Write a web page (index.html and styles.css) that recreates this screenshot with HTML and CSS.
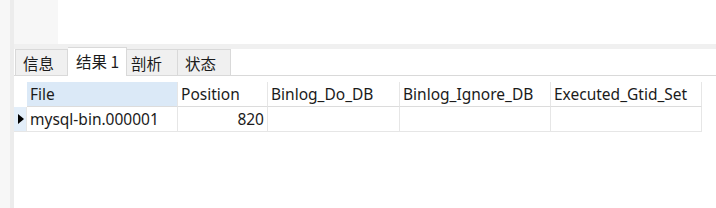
FILE: index.html
```html
<!DOCTYPE html>
<html lang="zh-CN">
  <head>
    <meta charset="UTF-8" />
    <title>结果</title>
    <link rel="stylesheet" href="styles.css">
  </head>
  <body>
    <div class="window">
      <div class="gutter"></div>
      <div class="main">
        <div class="toolbar">
          <div class="toolbar-left"></div>
        </div>
        <div class="band"></div>
        <div class="tabs">
          <div class="tab w-info">信息</div>
          <div class="tab active">结果 1</div>
          <div class="tab w-prof">剖析</div>
          <div class="tab w-stat">状态</div>
        </div>
        <div class="content">
          <div class="grid">
            <div class="cell corner"></div>
            <div class="cell head selected">File</div>
            <div class="cell head">Position</div>
            <div class="cell head">Binlog_Do_DB</div>
            <div class="cell head">Binlog_Ignore_DB</div>
            <div class="cell head">Executed_Gtid_Set</div>

            <div class="cell rowhead"><span class="arrow"></span></div>
            <div class="cell">mysql-bin.000001</div>
            <div class="cell num">820</div>
            <div class="cell"></div>
            <div class="cell"></div>
            <div class="cell"></div>
          </div>
        </div>
      </div>
    </div>
  </body>
</html>
```

FILE: styles.css
```css
body {
  margin: 0;
  background-color: #ffffff;
  font-family: "Noto Sans", "Noto Sans CJK SC", sans-serif;
  color: #1b1b1b;
}

.window {
  display: flex;
  width: 716px;
  height: 208px;
}

.gutter {
  width: 14px;
  background: linear-gradient(to right, #f7f7f7 0, #f7f7f7 10px, #ececec 10px, #ececec 14px);
}

.main {
  flex: 1;
  display: flex;
  flex-direction: column;
}

.toolbar {
  height: 44px;
  display: flex;
  background-color: #ffffff;
}

.toolbar-left {
  width: 44px;
  background-color: #f7f7f7;
}

.band {
  height: 5px;
  background-color: #f0f0f0;
}

.tabs {
  display: flex;
  align-items: flex-end;
  height: 26px;
  padding-left: 1px;
  border-bottom: 1px solid #d9d9d9;
}

.tab {
  height: 26px;
  line-height: 27px;
  padding: 0 0 0 7px;
  background-color: #f0f0f0;
  border: 1px solid #d9d9d9;
  border-bottom: none;
  border-left: none;
  font-family: "Noto Sans CJK SC", sans-serif;
  font-size: 15.5px;
  box-sizing: border-box;
}

.w-info {
  width: 53px;
  border-left: 1px solid #d9d9d9;
}

.w-prof {
  width: 51px;
  padding-left: 4px;
}

.w-stat {
  width: 53px;
  padding-left: 7px;
}

.tab.active {
  width: 59px;
  height: 29px;
  line-height: 27px;
  padding-left: 8px;
  background-color: #ffffff;
  margin-bottom: -1px;
}

.content {
  flex: 1;
  padding-top: 6px;
}

.grid {
  display: grid;
  grid-template-columns: 13px 151px 90px 132px 151px 151px;
  grid-auto-rows: 25px;
}

.cell {
  box-sizing: border-box;
  border-right: 1px solid #e6e6e6;
  border-bottom: 1px solid #e6e6e6;
  padding: 0 3px;
  font-size: 15.5px;
  line-height: 24px;
  white-space: nowrap;
  overflow: hidden;
}

.cell.head {
  border-bottom-color: #dcdcdc;
}

.corner {
  border-right: none;
  border-bottom: none;
}

.selected {
  background-color: #dbe9f7;
}

.rowhead {
  background-color: #e3eef9;
  display: flex;
  align-items: center;
  padding: 0 0 0 4px;
}

.arrow {
  width: 0;
  height: 0;
  border-top: 5px solid transparent;
  border-bottom: 5px solid transparent;
  border-left: 6px solid #000000;
}

.num {
  text-align: right;
}
```
